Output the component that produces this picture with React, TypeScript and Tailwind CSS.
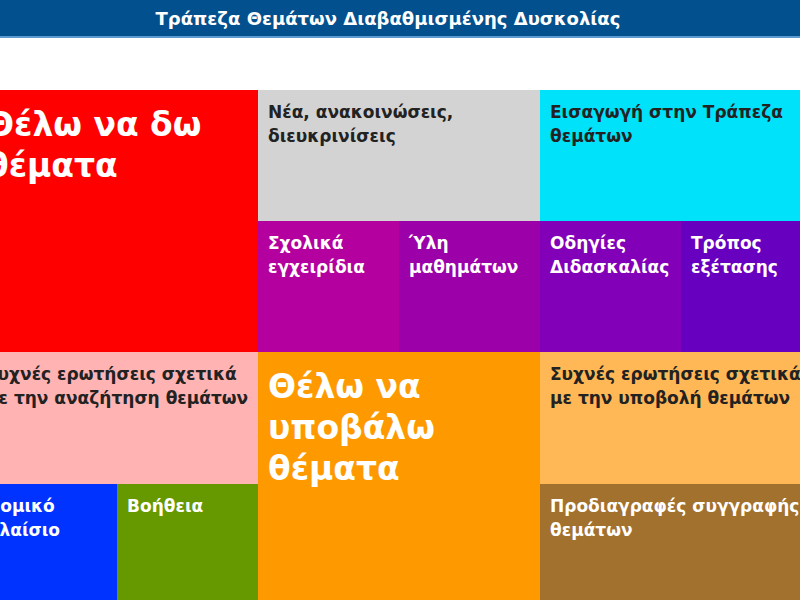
const font = "font-['DejaVu_Sans',sans-serif]";

type Tile = {
  label: string;
  area: string;
  bg: string;
  dark?: boolean;
  big?: boolean;
};

const tiles: Tile[] = [
  { label: "Θέλω να δω θέματα", area: "col-span-2 row-span-2", bg: "bg-[#ff0000]", big: true },
  { label: "Νέα, ανακοινώσεις, διευκρινίσεις", area: "col-span-2", bg: "bg-[#d3d3d3]", dark: true },
  { label: "Εισαγωγή στην Τράπεζα θεμάτων", area: "col-span-2", bg: "bg-[#00e1fa]", dark: true },
  { label: "Σχολικά εγχειρίδια", area: "", bg: "bg-[#b3009e]" },
  { label: "Ύλη μαθημάτων", area: "", bg: "bg-[#9b00a9]" },
  { label: "Οδηγίες Διδασκαλίας", area: "", bg: "bg-[#8200b8]" },
  { label: "Τρόπος εξέτασης", area: "", bg: "bg-[#6800c0]" },
  { label: "Συχνές ερωτήσεις σχετικά με την αναζήτηση θεμάτων", area: "col-span-2", bg: "bg-[#ffb3b3]", dark: true },
  { label: "Θέλω να υποβάλω θέματα", area: "col-span-2 row-span-2", bg: "bg-[#ff9900]", big: true },
  { label: "Συχνές ερωτήσεις σχετικά με την υποβολή θεμάτων", area: "col-span-2", bg: "bg-[#ffb855]", dark: true },
  { label: "Νομικό πλαίσιο", area: "", bg: "bg-[#0033ff]" },
  { label: "Βοήθεια", area: "", bg: "bg-[#669900]" },
  { label: "Προδιαγραφές συγγραφής θεμάτων", area: "col-span-2", bg: "bg-[#a2712d]" },
];

export default function App() {
  return (
    <div className={`h-[600px] w-[800px] overflow-hidden bg-white ${font}`}>
      <header className="flex h-[38px] items-center justify-center border-b-2 border-[#5b9bd0] bg-[#02508e] pr-[24px]">
        <h1 className="text-[18px] font-bold text-white">
          Τράπεζα Θεμάτων Διαβαθμισμένης Δυσκολίας
        </h1>
      </header>

      <div className="ml-[-24px] mt-[52px] grid w-[846px] grid-cols-[repeat(6,141px)] grid-rows-[131px_131px_132px_131px]">
        {tiles.map((t) => (
          <a
            key={t.label}
            href="#"
            className={`${t.area} ${t.bg} ${t.dark ? "text-[#222]" : "text-white"} ${
              t.big
                ? "px-[10px] pt-[14px] text-[33px] leading-[41px] font-bold"
                : "pl-[10px] pr-[4px] pt-[10px] text-[17px] leading-[24px] font-semibold"
            }`}
          >
            {t.label}
          </a>
        ))}
      </div>
    </div>
  );
}
